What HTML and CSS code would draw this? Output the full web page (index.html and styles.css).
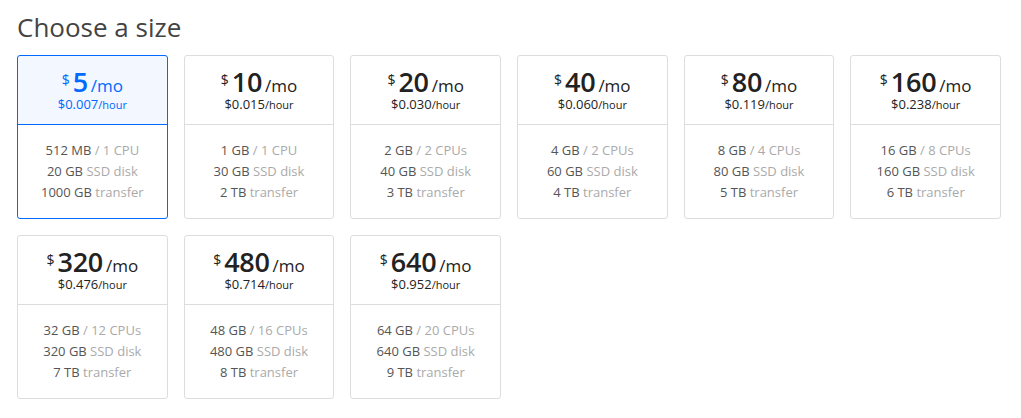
FILE: index.html
```html
<!DOCTYPE html>
<html>
<head>
<meta charset="utf-8">
<link rel="stylesheet" href="styles.css">
</head>
<body>
<h2 class="title">Choose a size</h2>
<div class="grid">
  <div class="card selected">
    <div class="head">
      <div class="price"><span class="cur">$</span><span class="amt">5</span><span class="per">/mo</span></div>
      <div class="hourly">$0.007<span class="hr">/hour</span></div>
    </div>
    <div class="specs">
      <div>512 MB <span class="dim">/ 1 CPU</span></div>
      <div>20 GB <span class="dim">SSD disk</span></div>
      <div>1000 GB <span class="dim">transfer</span></div>
    </div>
  </div>
  <div class="card">
    <div class="head">
      <div class="price"><span class="cur">$</span><span class="amt">10</span><span class="per">/mo</span></div>
      <div class="hourly">$0.015<span class="hr">/hour</span></div>
    </div>
    <div class="specs">
      <div>1 GB <span class="dim">/ 1 CPU</span></div>
      <div>30 GB <span class="dim">SSD disk</span></div>
      <div>2 TB <span class="dim">transfer</span></div>
    </div>
  </div>
  <div class="card">
    <div class="head">
      <div class="price"><span class="cur">$</span><span class="amt">20</span><span class="per">/mo</span></div>
      <div class="hourly">$0.030<span class="hr">/hour</span></div>
    </div>
    <div class="specs">
      <div>2 GB <span class="dim">/ 2 CPUs</span></div>
      <div>40 GB <span class="dim">SSD disk</span></div>
      <div>3 TB <span class="dim">transfer</span></div>
    </div>
  </div>
  <div class="card">
    <div class="head">
      <div class="price"><span class="cur">$</span><span class="amt">40</span><span class="per">/mo</span></div>
      <div class="hourly">$0.060<span class="hr">/hour</span></div>
    </div>
    <div class="specs">
      <div>4 GB <span class="dim">/ 2 CPUs</span></div>
      <div>60 GB <span class="dim">SSD disk</span></div>
      <div>4 TB <span class="dim">transfer</span></div>
    </div>
  </div>
  <div class="card">
    <div class="head">
      <div class="price"><span class="cur">$</span><span class="amt">80</span><span class="per">/mo</span></div>
      <div class="hourly">$0.119<span class="hr">/hour</span></div>
    </div>
    <div class="specs">
      <div>8 GB <span class="dim">/ 4 CPUs</span></div>
      <div>80 GB <span class="dim">SSD disk</span></div>
      <div>5 TB <span class="dim">transfer</span></div>
    </div>
  </div>
  <div class="card">
    <div class="head">
      <div class="price"><span class="cur">$</span><span class="amt">160</span><span class="per">/mo</span></div>
      <div class="hourly">$0.238<span class="hr">/hour</span></div>
    </div>
    <div class="specs">
      <div>16 GB <span class="dim">/ 8 CPUs</span></div>
      <div>160 GB <span class="dim">SSD disk</span></div>
      <div>6 TB <span class="dim">transfer</span></div>
    </div>
  </div>
  <div class="card">
    <div class="head">
      <div class="price"><span class="cur">$</span><span class="amt">320</span><span class="per">/mo</span></div>
      <div class="hourly">$0.476<span class="hr">/hour</span></div>
    </div>
    <div class="specs">
      <div>32 GB <span class="dim">/ 12 CPUs</span></div>
      <div>320 GB <span class="dim">SSD disk</span></div>
      <div>7 TB <span class="dim">transfer</span></div>
    </div>
  </div>
  <div class="card">
    <div class="head">
      <div class="price"><span class="cur">$</span><span class="amt">480</span><span class="per">/mo</span></div>
      <div class="hourly">$0.714<span class="hr">/hour</span></div>
    </div>
    <div class="specs">
      <div>48 GB <span class="dim">/ 16 CPUs</span></div>
      <div>480 GB <span class="dim">SSD disk</span></div>
      <div>8 TB <span class="dim">transfer</span></div>
    </div>
  </div>
  <div class="card">
    <div class="head">
      <div class="price"><span class="cur">$</span><span class="amt">640</span><span class="per">/mo</span></div>
      <div class="hourly">$0.952<span class="hr">/hour</span></div>
    </div>
    <div class="specs">
      <div>64 GB <span class="dim">/ 20 CPUs</span></div>
      <div>640 GB <span class="dim">SSD disk</span></div>
      <div>9 TB <span class="dim">transfer</span></div>
    </div>
  </div>
</div>
</body>
</html>
```
FILE: styles.css
```css
html, body {
  margin: 0;
  padding: 0;
  background: #fff;
}
body {
  padding: 0 20px 0 17px;
  font-family: "Open Sans", "Liberation Sans", sans-serif;
  color: #333;
}
.title {
  margin: 0;
  padding-top: 9px;
  height: 55px;
  box-sizing: border-box;
  font-size: 26px;
  font-weight: 400;
  line-height: 36px;
  color: #444;
}
.grid {
  width: 984px;
  display: grid;
  grid-template-columns: repeat(6, 1fr);
  gap: 16px 16px;
}
.card {
  height: 164px;
  box-sizing: border-box;
  border: 1px solid #ddd;
  border-radius: 3px;
  display: flex;
  flex-direction: column;
  text-align: center;
}
.head {
  height: 69px;
  box-sizing: border-box;
  border-bottom: 1px solid #ddd;
  padding-top: 12px;
}
.price {
  display: flex;
  justify-content: center;
  align-items: baseline;
  height: 27px;
  line-height: 1;
  color: #222;
}
.cur {
  align-self: flex-start;
  font-size: 14px;
  margin-top: 5px;
  margin-right: 3px;
}
.amt {
  font-size: 27px;
  font-weight: 600;
  letter-spacing: -0.3px;
}
.per {
  font-size: 17px;
  margin-left: 3px;
}
.hourly {
  margin-top: 1px;
  font-size: 13px;
  line-height: 16px;
  color: #222;
}
.hr {
  font-size: 11px;
}
.specs {
  padding-top: 15px;
  font-size: 13px;
  line-height: 21px;
  color: #555;
}
.dim {
  color: #aaa;
}
.card.selected {
  border-color: #0069ff;
  background: linear-gradient(#f3f7ff, #f3f7ff) top / 100% 68px no-repeat;
}
.card.selected .head {
  border-bottom-color: #0069ff;
}
.card.selected .price,
.card.selected .hourly {
  color: #0069ff;
}
```
